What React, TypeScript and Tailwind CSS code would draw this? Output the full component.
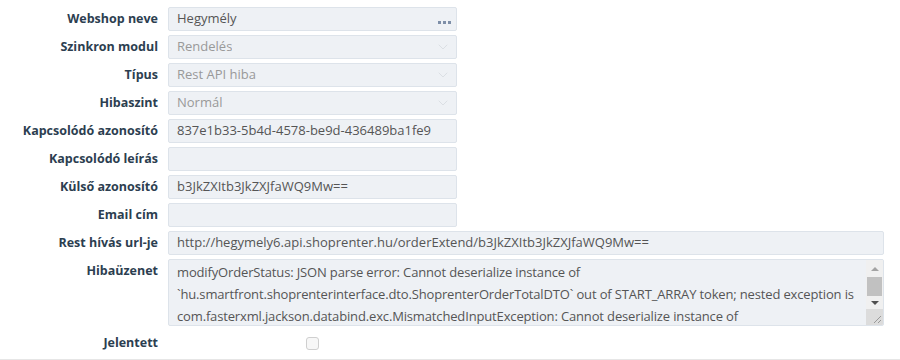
import { ChevronDown } from "lucide-react";

const font = { fontFamily: '"Open Sans", "Noto Sans", sans-serif' };

type Field = { label: string; value?: string; kind?: "text" | "select" | "lookup"; wide?: boolean };

const fields: Field[] = [
  { label: "Webshop neve", value: "Hegymély", kind: "lookup" },
  { label: "Szinkron modul", value: "Rendelés", kind: "select" },
  { label: "Típus", value: "Rest API hiba", kind: "select" },
  { label: "Hibaszint", value: "Normál", kind: "select" },
  { label: "Kapcsolódó azonosító", value: "837e1b33-5b4d-4578-be9d-436489ba1fe9" },
  { label: "Kapcsolódó leírás", value: "" },
  { label: "Külső azonosító", value: "b3JkZXItb3JkZXJfaWQ9Mw==" },
  { label: "Email cím", value: "" },
  {
    label: "Rest hívás url-je",
    value: "http://hegymely6.api.shoprenter.hu/orderExtend/b3JkZXItb3JkZXJfaWQ9Mw==",
    wide: true,
  },
];

const messageLines = [
  "modifyOrderStatus: JSON parse error: Cannot deserialize instance of",
  "`hu.smartfront.shoprenterinterface.dto.ShoprenterOrderTotalDTO` out of START_ARRAY token; nested exception is",
  "com.fasterxml.jackson.databind.exc.MismatchedInputException: Cannot deserialize instance of",
];

const Label = ({ children, className = "" }: { children: React.ReactNode; className?: string }) => (
  <div className={`w-[158px] shrink-0 text-right text-[12.5px] font-bold text-[#2c3e50] ${className}`}>
    {children}
  </div>
);

const FieldInput = ({ field }: { field: Field }) => {
  const muted = field.kind === "select";
  return (
    <div
      className={`relative flex h-6 items-center rounded-[2px] border border-[#dde3ea] bg-[#eef1f5] pl-2 pr-6 text-[13px] ${
        field.wide ? "w-[716px]" : "w-[289px]"
      } ${muted ? "text-[#999]" : "text-[#555]"}`}
    >
      <span className="truncate">{field.value}</span>
      {field.kind === "lookup" && (
        <span className="absolute right-[5px] bottom-[6px] flex gap-[2px]">
          <span className="h-[3px] w-[3px] bg-[#7e8fa8]" />
          <span className="h-[3px] w-[3px] bg-[#7e8fa8]" />
          <span className="h-[3px] w-[3px] bg-[#7e8fa8]" />
        </span>
      )}
      {field.kind === "select" && (
        <ChevronDown className="absolute right-[5px] h-4 w-4 text-[#d5dae0]" strokeWidth={1.2} />
      )}
    </div>
  );
};

export default function App() {
  return (
    <div className="h-[360px] w-[900px] bg-white" style={font}>
      <div className="flex flex-col gap-1 border-b border-[#e6e6e6] pt-[7px] pb-[3px]">
        {fields.map((f) => (
          <div key={f.label} className="flex items-center gap-[10px]">
            <Label>{f.label}</Label>
            <FieldInput field={f} />
          </div>
        ))}

        <div className="flex items-start gap-[10px]">
          <Label className="pt-[3px]">Hibaüzenet</Label>
          <div className="flex h-[67px] w-[716px] overflow-hidden rounded-[2px] border border-[#dde3ea] bg-[#eef1f5]">
            <div className="flex-1 overflow-hidden pl-2 pt-[1px] text-[13px] leading-[22px] tracking-[-0.15px] text-[#555]">
              {messageLines.map((l) => (
                <div key={l} className="whitespace-nowrap">
                  {l}
                </div>
              ))}
            </div>
            <div className="flex w-[17px] flex-col bg-[#f0f0f0]">
              <div className="flex h-[17px] items-center justify-center">
                <span className="h-0 w-0 border-x-[4px] border-b-[4px] border-x-transparent border-b-[#a3a3a3]" />
              </div>
              <div className="mx-[1px] h-[19px] bg-[#c1c1c1]" />
              <div className="flex h-[13px] items-center justify-center">
                <span className="h-0 w-0 border-x-[4px] border-t-[4px] border-x-transparent border-t-[#505050]" />
              </div>
              <div className="relative flex-1 bg-[#dcdcdc]">
                <svg className="absolute right-[1px] bottom-[1px]" width="10" height="10" viewBox="0 0 10 10">
                  <path d="M9 2 L2 9 M9 6 L6 9" stroke="#999" strokeWidth="1" />
                </svg>
              </div>
            </div>
          </div>
        </div>

        <div className="flex h-[26px] items-center gap-[10px]">
          <Label>Jelentett</Label>
          <div className="flex w-[289px] justify-center">
            <span className="h-[13px] w-[13px] rounded-[3px] border border-[#cfcfcf] bg-[#f7f7f7]" />
          </div>
        </div>
      </div>
    </div>
  );
}
